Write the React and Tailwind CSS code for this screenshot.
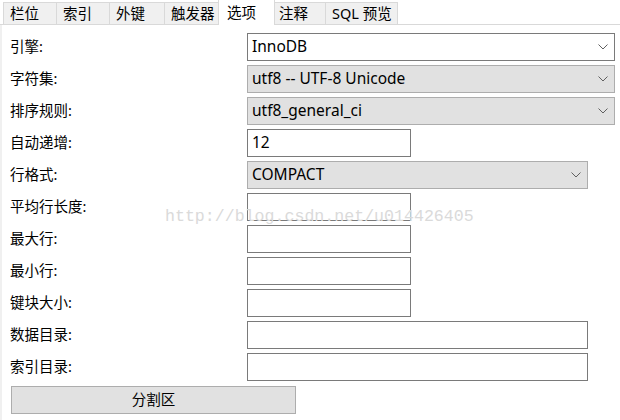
import React from "react";

const tabs = [
  { label: "栏位", w: "w-[54px]" },
  { label: "索引", w: "w-[53px]" },
  { label: "外键", w: "w-[55px]" },
  { label: "触发器", w: "w-[55px]" },
  { label: "选项", w: "w-[57px]", active: true },
  { label: "注释", w: "w-[53px]" },
  { label: "SQL 预览", w: "w-[72px]" },
];

function Chevron() {
  return (
    <svg width="10" height="6" viewBox="0 0 10 6" className="shrink-0">
      <path d="M0.5 0.5 L5 5 L9.5 0.5" fill="none" stroke="#606060" strokeWidth="1" />
    </svg>
  );
}

function Select({ value, width, white }) {
  return (
    <div
      className={`${width} h-[28px] flex items-center justify-between pl-[4px] pr-[6px] border ${
        white ? "bg-white border-[#7a7a7a]" : "bg-[#e1e1e1] border-[#adadad]"
      }`}
    >
      <span className="text-[15.5px] text-black leading-none">{value}</span>
      <Chevron />
    </div>
  );
}

function Input({ value, width }) {
  return (
    <div className={`${width} h-[28px] flex items-center pl-[4px] bg-white border border-[#7a7a7a]`}>
      <span className="text-[15.5px] text-black leading-none">{value}</span>
    </div>
  );
}

function Row({ label, children }) {
  return (
    <div className="flex items-center h-[28px]">
      <div className="w-[247px] pl-[10px] text-[14.5px] text-black">{label}</div>
      {children}
    </div>
  );
}

export default function App() {
  return (
    <div
      className="relative w-[620px] h-[420px] bg-white overflow-hidden"
      style={{ fontFamily: '"Noto Sans", "Noto Sans CJK SC", sans-serif' }}
    >
      {/* tab strip */}
      <div className="flex items-end h-[25px] pl-[3px] border-b border-[#d9d9d9]">
        {tabs.map((t) =>
          t.active ? (
            <div
              key={t.label}
              className={`${t.w} h-[26px] -mb-px -mx-[2px] relative pl-[8px] pt-[2px] bg-white border-x border-t border-[#d9d9d9] text-[14.5px] text-black leading-[20px]`}
            >
              {t.label}
            </div>
          ) : (
            <div
              key={t.label}
              className={`${t.w} h-[22px] pl-[6px] bg-[#f0f0f0] border-r border-t border-[#d9d9d9] first:border-l text-[14.5px] text-black leading-[20px]`}
            >
              {t.label}
            </div>
          )
        )}
      </div>

      {/* left window edge */}
      <div className="absolute left-0 top-[25px] bottom-0 w-[2px] bg-[#f0f0f0]" />

      <div className="flex flex-col gap-[4px] pt-[8px]">
        <Row label="引擎:">
          <Select value="InnoDB" width="w-[368px]" white />
        </Row>
        <Row label="字符集:">
          <Select value="utf8 -- UTF-8 Unicode" width="w-[368px]" />
        </Row>
        <Row label="排序规则:">
          <Select value="utf8_general_ci" width="w-[368px]" />
        </Row>
        <Row label="自动递增:">
          <Input value="12" width="w-[164px]" />
        </Row>
        <Row label="行格式:">
          <Select value="COMPACT" width="w-[341px]" />
        </Row>
        <Row label="平均行长度:">
          <Input width="w-[164px]" />
        </Row>
        <Row label="最大行:">
          <Input width="w-[164px]" />
        </Row>
        <Row label="最小行:">
          <Input width="w-[164px]" />
        </Row>
        <Row label="键块大小:">
          <Input width="w-[164px]" />
        </Row>
        <Row label="数据目录:">
          <Input width="w-[341px]" />
        </Row>
        <Row label="索引目录:">
          <Input width="w-[341px]" />
        </Row>
        <div className="pl-[11px] pt-[1px]">
          <div className="w-[285px] h-[28px] flex items-center justify-center bg-[#e1e1e1] border border-[#adadad] text-[14.5px] text-black">
            分割区
          </div>
        </div>
      </div>

      {/* watermark */}
      <div
        className="absolute left-[165px] top-[209px] text-[16.6px] text-[#dadada] leading-none pointer-events-none"
        style={{ fontFamily: '"Liberation Mono", monospace' }}
      >
        http://blog.csdn.net/u014426405
      </div>
    </div>
  );
}
